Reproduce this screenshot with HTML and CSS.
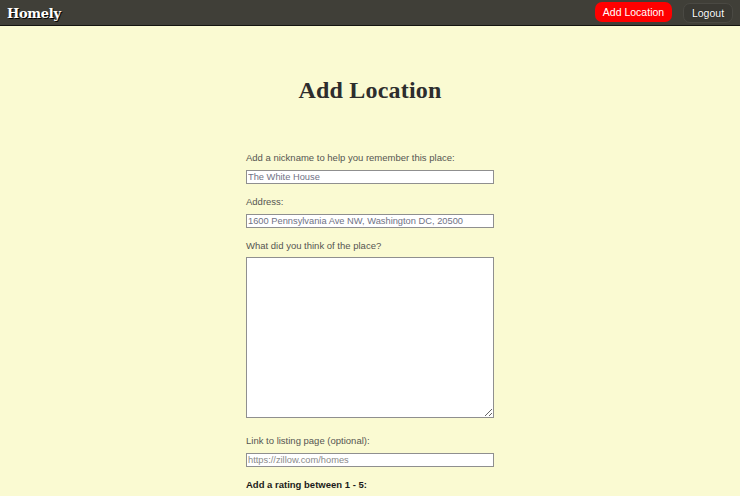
FILE: index.html
```html
<!DOCTYPE html>
<html>
<head>
<meta charset="utf-8">
<title>Homely - Add Location</title>
<link rel="stylesheet" href="styles.css">
</head>
<body>
<nav class="navbar">
  <a class="brand" href="#">Homely</a>
  <div class="nav-actions">
    <a class="btn btn-red" href="#">Add Location</a>
    <a class="btn btn-dark" href="#">Logout</a>
  </div>
</nav>
<main class="page">
  <h1 class="title">Add Location</h1>
  <form class="form">
    <div class="field">
      <label class="label">Add a nickname to help you remember this place:</label>
      <input class="input" type="text" placeholder="The White House">
    </div>
    <div class="field">
      <label class="label">Address:</label>
      <input class="input" type="text" placeholder="1600 Pennsylvania Ave NW, Washington DC, 20500">
    </div>
    <div class="field">
      <label class="label">What did you think of the place?</label>
      <textarea class="textarea"></textarea>
    </div>
    <div class="field field-gap">
      <label class="label">Link to listing page (optional):</label>
      <input class="input input-light" type="text" placeholder="https://zillow.com/homes">
    </div>
    <div class="field">
      <label class="label label-bold">Add a rating between 1 - 5:</label>
    </div>
  </form>
</main>
</body>
</html>
```
FILE: styles.css
```css
html, body {
  margin: 0;
  padding: 0;
}
body {
  background: #fafad2;
  font-family: "Liberation Sans", Arial, sans-serif;
  overflow: hidden;
}
.navbar {
  height: 25px;
  background: #403f38;
  border-bottom: 1px solid #141410;
  display: flex;
  align-items: center;
  justify-content: space-between;
  padding: 0 7px;
}
.brand {
  font-family: "DejaVu Serif", serif;
  font-weight: bold;
  font-size: 13px;
  color: #ffffff;
  text-decoration: none;
  text-shadow: 1px 1px 0 #000;
  letter-spacing: -0.3px;
  margin-top: 2px;
}
.nav-actions {
  display: flex;
  align-items: center;
  gap: 11px;
}
.btn {
  font-size: 10.5px;
  color: #fff;
  text-decoration: none;
  display: flex;
  align-items: center;
  justify-content: center;
  height: 20px;
  box-sizing: border-box;
  border-radius: 7px;
}
.btn-red {
  background: #ff0000;
  width: 77px;
  margin-top: -1px;
}
.btn-dark {
  background: #3a3933;
  border: 1px solid #4a4943;
  width: 50px;
  text-shadow: 0 0 1px #000;
  margin-top: 1px;
}
.page {
  display: flex;
  flex-direction: column;
  align-items: center;
}
.title {
  font-family: "Liberation Serif", "Times New Roman", serif;
  font-weight: bold;
  font-size: 24px;
  color: #2d2d2d;
  margin: 0;
  padding-top: 49px;
  line-height: 30px;
  letter-spacing: 0.2px;
}
.form {
  width: 248px;
  margin-top: 47px;
  display: flex;
  flex-direction: column;
}
.field {
  display: flex;
  flex-direction: column;
  gap: 7px;
  margin-bottom: 12px;
}
.label {
  font-size: 9.5px;
  line-height: 11px;
  color: #555551;
}
.label-bold {
  font-weight: bold;
  color: #1a1a1a;
}
.input {
  box-sizing: border-box;
  height: 14px;
  width: 248px;
  margin: 0;
  padding: 0 1px;
  border: 1px solid #8f8f8f;
  background: #fff;
  font-family: "Liberation Sans", Arial, sans-serif;
  font-size: 9.3px;
}
.input::placeholder {
  color: #6f7285;
}
.input-light::placeholder {
  color: #8a8a8a;
}
.textarea {
  box-sizing: border-box;
  width: 248px;
  height: 161px;
  margin: -1px 0 0 0;
  border: 1px solid #8f8f8f;
  background: #fff;
  display: block;
}
.field-gap {
  margin-top: 5px;
}
```
